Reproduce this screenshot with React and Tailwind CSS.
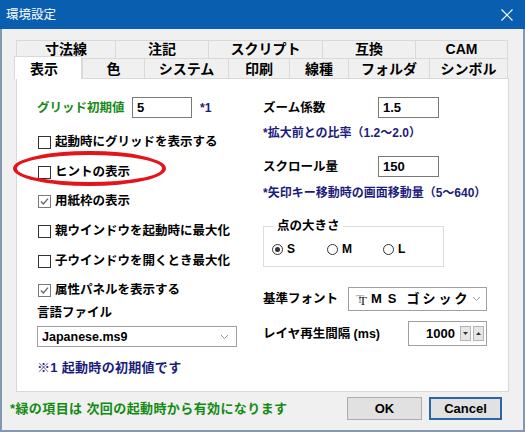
import React from "react";

function Check({ checked, label, className = "" }) {
  return (
    <div className={"flex items-center h-[20px] " + className}>
      <span
        className={
          "ml-[1px] w-[13px] h-[13px] border bg-white flex items-center justify-center shrink-0 " +
          (checked ? "border-[#7a7a7a]" : "border-[#333333]")
        }
      >
        {checked && (
          <svg width="11" height="11" viewBox="0 0 11 11">
            <path d="M2 5.6 L4.4 8 L9 2.6" fill="none" stroke="#6a6a6a" strokeWidth="1.4" />
          </svg>
        )}
      </span>
      <span className="ml-[4px] whitespace-nowrap">{label}</span>
    </div>
  );
}

function Chevron() {
  return (
    <svg width="9" height="6" viewBox="0 0 9 6">
      <path d="M1 1 L4.5 4.5 L8 1" fill="none" stroke="#9a9a9a" strokeWidth="1" />
    </svg>
  );
}

function Radio({ checked, label, className = "" }) {
  return (
    <div className={"flex items-center " + className}>
      <span className="w-[11px] h-[11px] rounded-full border border-[#333333] bg-white flex items-center justify-center shrink-0">
        {checked && <span className="w-[5px] h-[5px] rounded-full bg-[#333333]" />}
      </span>
      <span className="ml-[4px] text-[12px] font-['Liberation_Sans',sans-serif]">{label}</span>
    </div>
  );
}

function Tab({ label, w, last = false, row1 = false }) {
  return (
    <div
      className={
        "flex justify-center border-l border-t border-[#d9d9d9] bg-[#f0f0f0] whitespace-nowrap text-[14px] leading-[16px] " +
        (row1 ? "items-end pb-[1px] " : "items-center ") +
        (last ? "border-r " : "")
      }
      style={{ width: w }}
    >
      {label}
    </div>
  );
}

export default function App() {
  return (
    <div className="relative w-[525px] h-[432px] flex flex-col bg-[#f0f0f0] font-['Liberation_Sans','Noto_Sans_CJK_JP',sans-serif] font-bold text-black overflow-hidden">
      {/* title bar */}
      <div className="h-[29px] shrink-0 bg-[#0a5eb0] flex items-center justify-between pl-[6px] pr-[12px]">
        <span className="text-white text-[12.5px] font-normal font-['Noto_Sans_CJK_JP',sans-serif]">環境設定</span>
        <svg width="12" height="12" viewBox="0 0 12 12">
          <path d="M0.5 0.5 L11.5 11.5 M11.5 0.5 L0.5 11.5" stroke="#ffffff" strokeWidth="1.1" />
        </svg>
      </div>

      {/* body */}
      <div className="flex-1 flex flex-col border-x-2 border-b-2 border-[#8298b0] pl-[8px] pt-[11px]">
        <div className="ml-[6px] w-[493px] flex flex-col">
          {/* tab row 1 */}
          <div className="flex h-[18px] w-[492px]">
            <Tab row1 label="寸法線" w={99} />
            <Tab row1 label="注記" w={93} />
            <Tab row1 label="スクリプト" w={114} />
            <Tab row1 label="互換" w={93} />
            <Tab row1 label="CAM" w={93} last />
          </div>
          {/* tab row 2 */}
          <div className="flex h-[20px] w-[492px]">
            <div className="relative z-10 -ml-[2px] -mt-[2px] w-[68px] h-[23px] bg-white border-l border-t border-r border-[#d9d9d9] flex items-start justify-center pt-[4px] text-[14px] leading-[16px] pr-[8px]">
              表示
            </div>
            <Tab label="色" w={62} />
            <Tab label="システム" w={84} />
            <Tab label="印刷" w={61} />
            <Tab label="線種" w={59} />
            <Tab label="フォルダ" w={81} />
            <Tab label="シンボル" w={79} last />
          </div>

          {/* panel */}
          <div className="h-[314px] bg-white border border-[#d9d9d9] flex text-[12.5px] leading-[18px]">
            {/* left column */}
            <div className="w-[246px] pl-[20px] pt-[18px] flex flex-col">
              <div className="flex items-center h-[21px]">
                <span className="w-[95px] text-[#178a17] whitespace-nowrap">グリッド初期値</span>
                <div className="w-[60px] h-[21px] border border-[#7a7a7a] bg-white flex items-center pl-[4px] text-[13px]">
                  5
                </div>
                <span className="ml-[8px] text-[#1c1c7c] text-[12px]">*1</span>
              </div>
              <Check className="mt-[14px]" label="起動時にグリッドを表示する" />
              <Check className="mt-[10px]" label="ヒントの表示" />
              <Check className="mt-[9px]" checked label="用紙枠の表示" />
              <Check className="mt-[10px]" label="親ウインドウを起動時に最大化" />
              <Check className="mt-[10px]" label="子ウインドウを開くとき最大化" />
              <Check className="mt-[9px]" checked label="属性パネルを表示する" />
              <div className="mt-[4px] h-[18px] flex items-center">言語ファイル</div>
              <div className="mt-[4px] w-[200px] h-[21px] border border-[#a0a0a0] bg-white flex items-center justify-between pl-[4px] pr-[7px]">
                <span className="text-[12.5px]">Japanese.ms9</span>
                <Chevron />
              </div>
              <div className="mt-[12px] h-[18px] flex items-center text-[#1c1c7c] text-[13px] tracking-[0.3px] whitespace-nowrap">※1 起動時の初期値です</div>
            </div>

            {/* right column */}
            <div className="flex-1 pt-[18px] flex flex-col">
              <div className="flex items-center h-[21px]">
                <span className="w-[115px] whitespace-nowrap">ズーム係数</span>
                <div className="w-[61px] h-[21px] border border-[#7a7a7a] bg-white flex items-center pl-[4px] text-[13px]">
                  1.5
                </div>
              </div>
              <div className="mt-[6px] h-[18px] flex items-center text-[#1c1c7c] text-[12px] whitespace-nowrap">
                *拡大前との比率（1.2～2.0）
              </div>
              <div className="mt-[14px] flex items-center h-[21px]">
                <span className="w-[115px] whitespace-nowrap">スクロール量</span>
                <div className="w-[61px] h-[21px] border border-[#7a7a7a] bg-white flex items-center pl-[4px] text-[13px]">
                  150
                </div>
              </div>
              <div className="mt-[7px] h-[18px] flex items-center text-[#1c1c7c] text-[12px] whitespace-nowrap">
                *矢印キー移動時の画面移動量（5～640）
              </div>

              {/* group box */}
              <div className="mt-[24px] w-[181px] h-[41px] border border-[#dcdcdc] flex flex-col">
                <span className="-mt-[10px] ml-[10px] px-[3px] bg-white w-fit h-[18px] leading-[18px]">点の大きさ</span>
                <div className="mt-[6px] h-[16px] flex items-center pl-[8px]">
                  <Radio checked label="S" className="w-[55px]" />
                  <Radio label="M" className="w-[56px]" />
                  <Radio label="L" />
                </div>
              </div>

              <div className="mt-[20px] flex items-center h-[24px]">
                <span className="w-[85px] whitespace-nowrap">基準フォント</span>
                <div className="w-[139px] h-[24px] border border-[#a0a0a0] bg-white flex items-center pl-[10px] pr-[5px]">
                  <span className="w-[9px] h-[16px] pt-[2px] font-['Liberation_Serif',serif] font-normal text-[13px] leading-[16px] text-[#222] [text-shadow:-3px_-2px_0_#a0a0a0]">
                    T
                  </span>
                  <span className="ml-[3px] text-[13px] tracking-[6px] whitespace-nowrap">MS</span>
                  <span className="ml-[4px] text-[13px] tracking-[3px] whitespace-nowrap">ゴシック</span>
                  <span className="ml-auto">
                    <Chevron />
                  </span>
                </div>
              </div>

              <div className="mt-[10px] flex items-center h-[25px]">
                <span className="w-[145px] whitespace-nowrap">レイヤ再生間隔 (ms)</span>
                <div className="w-[79px] h-[25px] border border-[#a0a0a0] bg-white flex items-center justify-end pr-[2px]">
                  <span className="text-[13px] mr-[5px]">1000</span>
                  <span className="w-[11px] h-[15px] bg-[#e6e6e6] border border-[#b5b5b5] flex items-center justify-center">
                    <svg width="5" height="3" viewBox="0 0 5 3"><path d="M0 0 L5 0 L2.5 3 Z" fill="#333" /></svg>
                  </span>
                  <span className="ml-[2px] w-[11px] h-[15px] bg-[#e6e6e6] border border-[#b5b5b5] flex items-center justify-center">
                    <svg width="5" height="3" viewBox="0 0 5 3"><path d="M0 3 L5 3 L2.5 0 Z" fill="#333" /></svg>
                  </span>
                </div>
              </div>
            </div>
          </div>
        </div>

        {/* footer */}
        <div className="mt-[5px] h-[23px] w-[492px] flex items-center">
          <span className="text-[13px] tracking-[0.4px] text-[#138a13] whitespace-nowrap">*緑の項目は 次回の起動時から有効になります</span>
          <div className="ml-auto flex">
            <div className="w-[75px] h-[23px] bg-[#e1e1e1] border border-[#adadad] flex items-center justify-center text-[13px]">
              OK
            </div>
            <div className="ml-[7px] w-[73px] h-[23px] bg-[#e1e1e1] border-2 border-[#2b67a8] flex items-center justify-center text-[13px]">
              Cancel
            </div>
          </div>
        </div>
      </div>

      {/* red annotation ellipse */}
      <div className="absolute left-[13px] top-[151px] w-[153px] h-[35px] rounded-[50%] border-[4px] border-[#e3141a]" />
    </div>
  );
}
